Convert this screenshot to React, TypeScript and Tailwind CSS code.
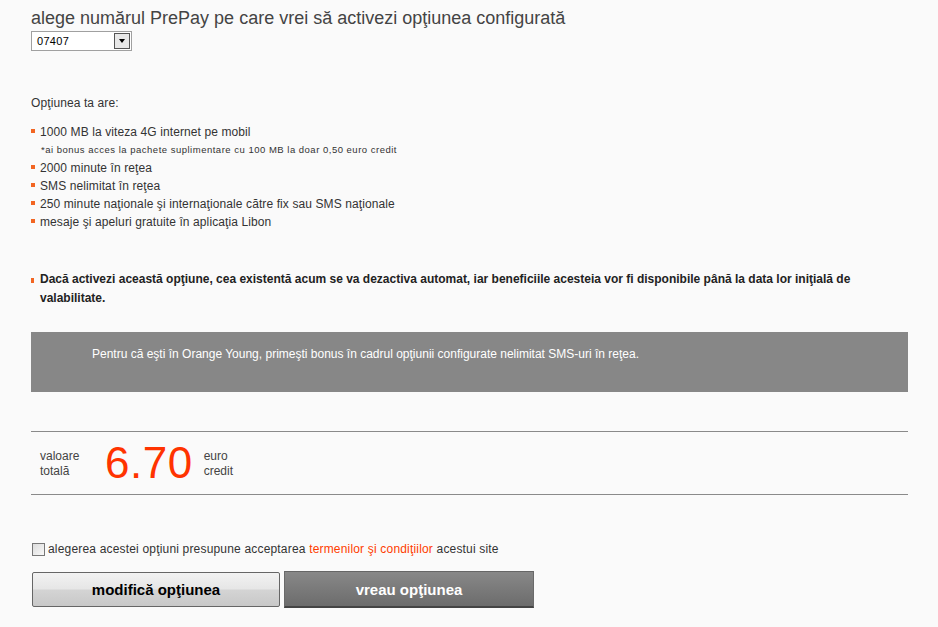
import React from "react";

const Bullet = () => (
  <span className="inline-block w-[4px] h-[4px] bg-[#f26522] mr-[5px] align-middle relative top-[-1px]" />
);

export default function App() {
  const items = [
    "1000 MB la viteza 4G internet pe mobil",
    null,
    "2000 minute în reţea",
    "SMS nelimitat în reţea",
    "250 minute naţionale şi internaţionale către fix sau SMS naţionale",
    "mesaje şi apeluri gratuite în aplicaţia Libon",
  ];
  return (
    <div className="min-h-screen bg-[#fafafa] font-['Liberation_Sans',Arial,sans-serif] text-[#333] pl-[31px] pr-[30px]">
      <div className="pt-[7px] text-[18px] leading-[22px] text-[#444]">
        alege numărul PrePay pe care vrei să activezi opţiunea configurată
      </div>
      <div className="mt-[2px] h-[20px] w-[101px] border border-[#a0a0a0] bg-white flex items-center justify-between">
        <span className="pl-[5px] text-[11px] leading-[14px] text-black tracking-[0.3px]">07407</span>
        <span className="mr-[1px] h-[16px] w-[16px] border border-[#555] bg-[#e8e8e8] flex items-center justify-center">
          <span className="block w-0 h-0 border-l-[3.5px] border-r-[3.5px] border-t-[4px] border-l-transparent border-r-transparent border-t-black" />
        </span>
      </div>

      <div className="mt-[43px] text-[12px] leading-[18px] tracking-[0.1px]">Opţiunea ta are:</div>
      <div className="mt-[11px] text-[12px] leading-[18px] tracking-[0.1px]">
        {items.map((t, i) =>
          t === null ? (
            <div key={i} className="pl-[10px] text-[9.5px] tracking-[0.5px]">
              *ai bonus acces la pachete suplimentare cu 100 MB la doar 0,50 euro credit
            </div>
          ) : (
            <div key={i} className="flex items-center">
              <Bullet />
              <span>{t}</span>
            </div>
          )
        )}
      </div>

      <div className="mt-[39px] flex text-[12px] leading-[19px] font-bold text-[#222]">
        <span className="inline-block w-[3px] h-[5px] bg-[#f26522] mt-[8px] mr-[6px] shrink-0" />
        <span>
          Dacă activezi această opţiune, cea existentă acum se va dezactiva automat, iar beneficiile acesteia vor fi disponibile până la data lor iniţială de
          <br />
          valabilitate.
        </span>
      </div>

      <div className="mt-[24px] h-[60px] bg-[#878787] pl-[61px] pt-[14px] text-white text-[12px] leading-[16px]">
        Pentru că eşti în Orange Young, primeşti bonus în cadrul opţiunii configurate nelimitat SMS-uri în reţea.
      </div>

      <div className="mt-[39px] h-[64px] border-y border-[#8a8a8a] flex items-center">
        <div className="pl-[9px] w-[74px] text-[12px] leading-[15px] text-[#444] mt-[2px]">
          valoare
          <br />
          totală
        </div>
        <div className="text-[44px] leading-[44px] text-[#ff3300] tracking-[0.5px]">6.70</div>
        <div className="ml-[11px] text-[12px] leading-[15px] text-[#444] mt-[2px]">
          euro
          <br />
          credit
        </div>
      </div>

      <div className="mt-[46px] flex items-center text-[12px] leading-[16px] tracking-[0.18px]">
        <span className="ml-[1px] w-[13px] h-[13px] border border-[#777] bg-gradient-to-br from-[#dcdcdc] to-[#f8f8f8] mr-[3px] shrink-0" />
        <span>
          alegerea acestei opţiuni presupune acceptarea{" "}
          <span className="text-[#ff3c00]">termenilor şi condiţiilor</span> acestui site
        </span>
      </div>

      <div className="mt-[14px] flex items-start gap-[4px]">
        <button className="ml-[1px] mt-[1px] w-[248px] h-[35px] rounded-[2px] border border-[#666] bg-[linear-gradient(#f2f2f2_0%,#e6e6e6_48%,#d4d4d4_52%,#c8c8c8_100%)] text-[15px] font-bold text-black pt-[1px]">
          modifică opţiunea
        </button>
        <button className="w-[250px] h-[37px] border-x border-t border-b-[2px] border-x-[#6a6a6a] border-t-[#666] border-b-[#444] bg-[linear-gradient(#888_0%,#6c6c6c_100%)] text-[15px] font-bold text-white pt-[3px]">
          vreau opţiunea
        </button>
      </div>
    </div>
  );
}
